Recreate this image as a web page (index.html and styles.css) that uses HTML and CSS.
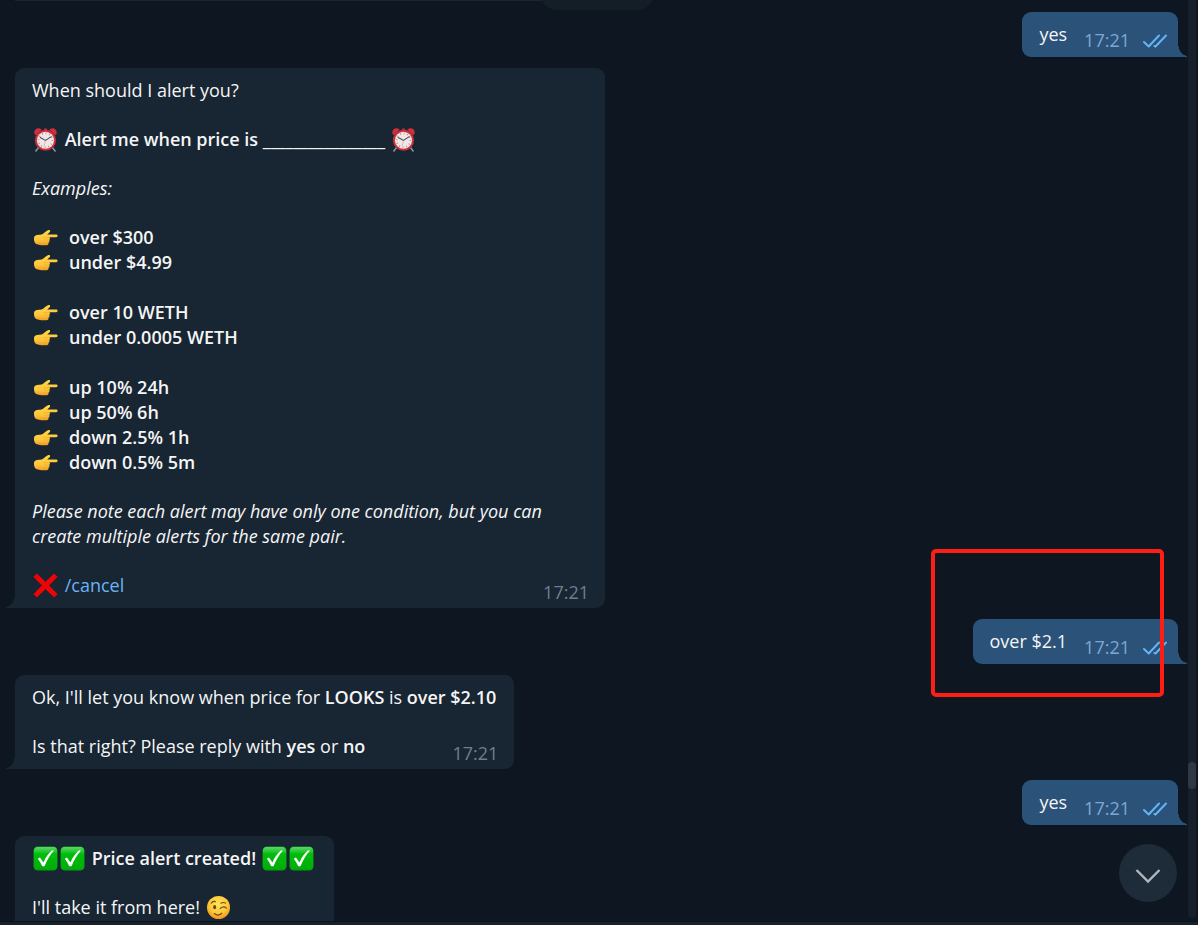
FILE: index.html
```
<!DOCTYPE html>
<html lang="en">
<head>
<meta charset="utf-8">
<title>Price alerts chat</title>
<link rel="stylesheet" href="styles.css">
</head>
<body>
<svg class="sprite" aria-hidden="true">
  <defs>
    <linearGradient id="skin" x1="0" y1="0" x2="0" y2="1"><stop offset="0" stop-color="#ffd545"/><stop offset=".65" stop-color="#ffc63c"/><stop offset="1" stop-color="#ee9c22"/></linearGradient>
    <linearGradient id="green" x1="0" y1="0" x2="0" y2="1"><stop offset="0" stop-color="#5fd668"/><stop offset=".25" stop-color="#17c225"/><stop offset=".3" stop-color="#00bd0c"/><stop offset="1" stop-color="#00ad08"/></linearGradient>
    <radialGradient id="face" cx=".5" cy=".35" r=".65"><stop offset="0" stop-color="#ffe45c"/><stop offset=".6" stop-color="#fdc93a"/><stop offset="1" stop-color="#ee9420"/></radialGradient>
    <symbol id="clock" viewBox="0 0 26 26">
      <path d="M6 21l-3 4M20 21l3 4" stroke="#8d9499" stroke-width="1.6" stroke-linecap="round"/>
      <path d="M11.500 1.500h3v3h-3z" fill="#bb2c38"/>
      <path d="M1.500 7C.5 2.500 5-.5 9 2.500L2.800 8.500zM24.500 7C25.500 2.500 21-.5 17 2.500l6.200 6z" fill="#cf303d"/>
      <circle cx="13" cy="13.800" r="11" fill="#ca2e3b"/>
      <circle cx="13" cy="13.800" r="8.900" fill="#eee9e8"/>
      <circle cx="13" cy="13.800" r="7.200" fill="none" stroke="#dd7077" stroke-width="1.800" stroke-dasharray=".8 2.970"/>
      <path d="M7.500 11l5.500 3 6-4" fill="none" stroke="#4b4b50" stroke-width="1.100" stroke-linecap="round"/>
      <path d="M13 14l-1.500 6" stroke="#dc7b82" stroke-width=".5"/>
    </symbol>
    <symbol id="point" viewBox="0 0 26 26">
      <path d="M1 14c0-2 1-3 3-3.500l5-.6c2-.8 4-3 6.500-4.400 2-.8 3 .8 1.800 2L14.800 9.800h9.300c2 0 2 2.900 0 2.900h-7.200c1 .6 1 2.400-.1 2.900.7 1 .4 2.300-.7 2.700.3 1.400-.5 2.600-2 2.700-3.600.3-7.400.3-9-.6-2.900-.3-4.100-2.600-4.100-6.400z" fill="url(#skin)"/>
      <path d="M11 13.200h5.700M11.600 15.700h5M11.500 18.300h4" fill="none" stroke="#eda72b" stroke-width=".7" stroke-linecap="round"/>
    </symbol>
    <symbol id="cross" viewBox="0 0 26 26">
      <path d="M4 1l9 8.600L22 1l3 3-8.700 9L25 22l-3 3-9-8.700L4 25l-3-3 8.700-9L1 4z" fill="#ee0404" stroke="#ee0404" stroke-linejoin="round"/>
    </symbol>
    <symbol id="check" viewBox="0 0 26 26">
      <rect x=".5" y=".5" width="25" height="25" rx="4.500" fill="#079b12"/>
      <rect x="1" y="1" width="24" height="23.500" rx="4" fill="url(#green)"/>
      <path d="M5 13.200l2.200-1.300 3.700 5.200C13 12 16 8 19.500 4.800h2.300C17.500 9.500 14.700 14.500 12 21h-2.400C8.300 18 6.800 15.400 5 13.200z" fill="#fff"/>
    </symbol>
    <symbol id="wink" viewBox="0 0 26 26">
      <circle cx="13" cy="13" r="12" fill="url(#face)"/>
      <ellipse cx="9" cy="12.700" rx="1.500" ry="2.200" fill="#69410f"/>
      <path d="M5.500 8.500c1-1.700 2.700-2.300 4.300-1.600M15.500 8.500c1.500-.9 3.200-.9 4.800-.1M14.800 14c2.200-2 4.500-2 6.500-.4M8.700 19.300c2.300 2 5.400 1.900 7.700-.3" fill="none" stroke="#76490f" stroke-width="1.200" stroke-linecap="round"/>
    </symbol>
    <symbol id="read" viewBox="0 0 24 14">
      <path d="M1 8l4.700 4.500L16 1.500M11.500 12l1 .5L23 1.500" fill="none" stroke="#64b5f6" stroke-width="2" stroke-linecap="round" stroke-linejoin="round"/>
    </symbol>
  </defs>
</svg>
<div class="app">
  <main class="chat">
    <div class="messages">
      <div class="previous"></div>
      <article class="bubble out">
        <p class="text">yes</p>
        <div class="meta"><time>17:21</time><svg class="ticks" role="img" aria-label="Read"><use href="#read"/></svg></div>
      </article>

      <article class="bubble in">
        <div class="text">
          <p>When should I alert you?</p>
          <p><svg class="emoji"><use href="#clock"/></svg> <b>Alert me when price is ________________</b> <svg class="emoji"><use href="#clock"/></svg></p>
          <p><i>Examples:</i></p>
          <div class="examples">
            <ul>
              <li><svg class="emoji"><use href="#point"/></svg><b>over $300</b></li>
              <li><svg class="emoji"><use href="#point"/></svg><b>under $4.99</b></li>
            </ul>
            <ul>
              <li><svg class="emoji"><use href="#point"/></svg><b>over 10 WETH</b></li>
              <li><svg class="emoji"><use href="#point"/></svg><b>under 0.0005 WETH</b></li>
            </ul>
            <ul>
              <li><svg class="emoji"><use href="#point"/></svg><b>up 10% 24h</b></li>
              <li><svg class="emoji"><use href="#point"/></svg><b>up 50% 6h</b></li>
              <li><svg class="emoji"><use href="#point"/></svg><b>down 2.5% 1h</b></li>
              <li><svg class="emoji"><use href="#point"/></svg><b>down 0.5% 5m</b></li>
            </ul>
          </div>
          <p><i>Please note each alert may have only one condition, but you can create multiple alerts for the same pair.</i></p>
          <p><svg class="emoji"><use href="#cross"/></svg> <a href="#cancel">/cancel</a></p>
        </div>
        <div class="meta"><time>17:21</time></div>
      </article>

      <article class="bubble out">
        <p class="text">over $2.1</p>
        <div class="meta"><time>17:21</time><svg class="ticks" role="img" aria-label="Read"><use href="#read"/></svg></div>
        <div class="highlight"></div>
      </article>

      <article class="bubble in">
        <div class="text">
          <p>Ok, I'll let you know when price for <b>LOOKS</b> is <b>over $2.10</b></p>
          <p>Is that right? Please reply with <b>yes</b> or <b>no</b></p>
        </div>
        <div class="meta"><time>17:21</time></div>
      </article>

      <article class="bubble out">
        <p class="text">yes</p>
        <div class="meta"><time>17:21</time><svg class="ticks" role="img" aria-label="Read"><use href="#read"/></svg></div>
      </article>

      <article class="bubble in">
        <div class="text">
          <p><svg class="emoji"><use href="#check"/></svg><svg class="emoji"><use href="#check"/></svg> <b>Price alert created!</b> <svg class="emoji"><use href="#check"/></svg><svg class="emoji"><use href="#check"/></svg></p>
          <p>I'll take it from here! <svg class="emoji"><use href="#wink"/></svg></p>
        </div>
      </article>
    </div>
    <div class="date-pill"></div>
    <div class="scrollbar"><div class="thumb"></div></div>
    <button class="to-bottom" type="button" aria-label="Scroll to bottom">
      <svg class="chevron" viewBox="0 0 26 16"><path d="M1.500 2L13 13.500 24.500 2" fill="none" stroke="#b0b6bb" stroke-width="2.400"/></svg>
    </button>
  </main>
  <footer class="composer"></footer>
</div>
</body>
</html>
```
FILE: styles.css
```
* { box-sizing: border-box; }

body {
  margin: 0;
  background: #0e1621;
  color: #f5f5f5;
  font: 18px/25px "Open Sans", "Noto Sans", sans-serif;
}

p, ul { margin: 0; padding: 0; list-style: none; }
b { font-weight: 600; }
a { color: #6ab3f3; text-decoration: none; }

.sprite { position: absolute; width: 0; height: 0; }

.app {
  display: flex;
  flex-direction: column;
  height: 100vh;
  overflow: hidden;
}

.chat {
  position: relative;
  flex: 1;
  min-height: 0;
  overflow: hidden;
}

.composer {
  height: 4px;
  background: #17212b;
  border-top: 1px solid #0a121b;
}

.messages {
  display: flex;
  flex-direction: column;
  align-items: flex-start;
  gap: 11px;
  padding: 0 20px 0 15px;
}

.previous {
  width: 590px;
  max-width: 60%;
  height: 1px;
  background: #182533;
}

.bubble {
  position: relative;
  max-width: 590px;
  padding: 10px 18px 10px 17px;
  border-radius: 9px;
}

.bubble::after {
  content: "";
  position: absolute;
  bottom: 0;
  width: 9px;
  height: 14px;
}

.in {
  background: #182533;
  border-bottom-left-radius: 0;
}

.in::after {
  right: 100%;
  background: radial-gradient(9px 13px at 0 0, transparent 96%, #182533);
}

.out {
  display: flex;
  gap: 17px;
  align-self: flex-end;
  padding-right: 11px;
  background: #2b5278;
  border-bottom-right-radius: 0;
}

.out::after {
  left: 100%;
  background: radial-gradient(9px 13px at 100% 0, transparent 96%, #2b5278);
}

.in .text {
  display: flex;
  flex-direction: column;
  gap: 24px;
}

.examples {
  display: flex;
  flex-direction: column;
  gap: 25px;
}

.emoji {
  width: 25px;
  height: 25px;
  margin: -4px 2px 0 1px;
  vertical-align: middle;
}

.examples li { display: flex; align-items: center; }
.examples .emoji { margin: 0 11px 0 1px; }

.emoji + .emoji { margin-left: 0; }

.meta {
  display: flex;
  align-items: center;
  gap: 13px;
  color: #6d7f8f;
}

.out .meta {
  height: 25px;
  margin-top: 6px;
  margin-bottom: -6px;
  color: #7da8d3;
}

.in .meta {
  position: absolute;
  right: 16px;
  bottom: 3px;
}

.ticks { width: 24px; height: 14px; }

.highlight {
  position: absolute;
  z-index: 1;
  inset: -70px 14px -33px -42px;
  border: 4px solid #ff1e14;
  border-radius: 5px;
}

.date-pill {
  position: absolute;
  top: -20px;
  left: calc(50% - 58px);
  width: 112px;
  height: 30px;
  border-radius: 15px;
  background: #131e27;
}

.scrollbar {
  position: absolute;
  top: 0;
  right: 2px;
  bottom: 3px;
  width: 8px;
  background: #171f2a;
  border-radius: 0 0 4px 4px;
}

.thumb {
  position: absolute;
  top: 83%;
  width: 100%;
  height: 27px;
  border-radius: 4px;
  background: #303843;
}

.to-bottom {
  position: absolute;
  right: 21px;
  bottom: 19px;
  display: grid;
  place-items: center;
  width: 58px;
  height: 58px;
  padding: 6px 0 0;
  border: 0;
  border-radius: 50%;
  background: #1e2c3a;
}

.chevron { width: 26px; height: 16px; }
```
